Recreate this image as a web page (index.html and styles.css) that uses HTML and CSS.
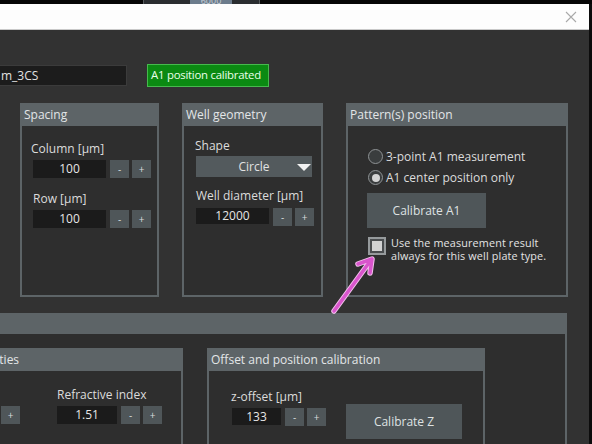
FILE: index.html
```html
<!DOCTYPE html>
<html>
<head>
<meta charset="utf-8">
<link rel="stylesheet" href="styles.css">
</head>
<body>
<div class="topstrip"><div class="tab"><div class="tabinner">6000</div></div></div>
<div class="window">
  <div class="titlebar">
    <svg class="close" width="12" height="12" viewBox="0 0 12 12"><path d="M1 1L11 11M11 1L1 11" stroke="#a9a9a9" stroke-width="1.1" fill="none"/></svg>
  </div>
  <div class="content">
    <div class="row1">
      <div class="namefield">m_3CS</div>
      <div class="badge">A1 position calibrated</div>
    </div>
    <div class="row2">
      <section class="group spacing">
        <div class="ghead">Spacing</div>
        <div class="gbody">
          <div class="field">
            <div class="label">Column [µm]</div>
            <div class="ctrl"><div class="num w73">100</div><div class="btn">-</div><div class="btn">+</div></div>
          </div>
          <div class="field">
            <div class="label">Row [µm]</div>
            <div class="ctrl"><div class="num w73">100</div><div class="btn">-</div><div class="btn">+</div></div>
          </div>
        </div>
      </section>
      <section class="group geometry">
        <div class="ghead">Well geometry</div>
        <div class="gbody">
          <div class="label">Shape</div>
          <div class="dropdown"><span>Circle</span><span class="tri"></span></div>
          <div class="label lbl2">Well diameter [µm]</div>
          <div class="ctrl"><div class="num w73 h16">12000</div><div class="btn">-</div><div class="btn">+</div></div>
        </div>
      </section>
      <section class="group pattern">
        <div class="ghead">Pattern(s) position</div>
        <div class="gbody">
          <div class="radio"><span class="rcircle"></span><span>3-point A1 measurement</span></div>
          <div class="radio"><span class="rcircle on"></span><span>A1 center position only</span></div>
          <div class="bigbtn calA1">Calibrate A1</div>
          <div class="check"><span class="cbox"><span class="cfill"></span></span><span class="ctext"><span class="cline">Use the measurement result</span><span class="cline">always for this well plate type.</span></span></div>
        </div>
      </section>
    </div>
    <section class="group big">
      <div class="ghead bighead"></div>
      <div class="gbody bigbody">
        <section class="group props">
          <div class="ghead">Properties</div>
          <div class="gbody propsbody">
            <div class="field first">
              <div class="label">&nbsp;</div>
              <div class="ctrl"><div class="num w60">1.0</div><div class="btn">-</div><div class="btn">+</div></div>
            </div>
            <div class="field">
              <div class="label">Refractive index</div>
              <div class="ctrl"><div class="num w60">1.51</div><div class="btn">-</div><div class="btn">+</div></div>
            </div>
          </div>
        </section>
        <section class="group offset">
          <div class="ghead">Offset and position calibration</div>
          <div class="gbody offsetbody">
            <div class="field">
              <div class="label">z-offset [µm]</div>
              <div class="ctrl"><div class="num w49">133</div><div class="btn">-</div><div class="btn">+</div></div>
            </div>
            <div class="bigbtn calZ">Calibrate Z</div>
          </div>
        </section>
      </div>
    </section>
  </div>
</div>
<svg class="arrow" width="592" height="444" viewBox="0 0 592 444">
  <g fill="none" stroke-linecap="round" stroke-linejoin="round">
    <path d="M334 311L371 260M358 264L372 259L370 273" stroke="#f2c2ec" stroke-width="5.5"/>
    <path d="M334 311L371 260M358 264L372 259L370 273" stroke="#d955cc" stroke-width="3.5"/>
  </g>
</svg>
</body>
</html>
```
FILE: styles.css
```css
* { box-sizing: border-box; }
html, body { margin: 0; padding: 0; }
body {
  width: 592px;
  height: 444px;
  overflow: hidden;
  background: #0c0c0c;
  font-family: "Open Sans", "Noto Sans", sans-serif;
  font-size: 12px;
  color: #dedede;
  position: relative;
}
.topstrip {
  height: 4px;
  background: #050505;
  position: relative;
}
.tab {
  position: absolute;
  left: 143px;
  top: 0;
  width: 117px;
  height: 4px;
  background: #2a2d30;
  border-left: 1px solid #55595c;
  border-right: 1px solid #55595c;
}
.tabinner {
  margin-left: 46px;
  width: 42px;
  height: 4px;
  background: #6c7c8c;
  color: #c8d0d8;
  font-size: 9px;
  line-height: 2px;
  overflow: hidden;
  text-align: center;
}
.window {
  width: 589px;
  height: 440px;
  background: #323232;
  overflow: hidden;
}
.titlebar {
  height: 26px;
  background: #fdfdfd;
  border-bottom: 1px solid #c9c9c9;
  display: flex;
  justify-content: flex-end;
  align-items: center;
  padding-right: 12px;
}
.close { display: block; }
.content {
  padding-top: 34px;
}
.row1 {
  display: flex;
  align-items: center;
  gap: 20px;
  height: 23px;
}
.namefield {
  width: 127px;
  height: 21px;
  background: #1c1c1c;
  border: 1px solid #3b3b3b;
  border-left: none;
  color: #e2e2e2;
  font-size: 12px;
  line-height: 19px;
  padding-left: 1px;
}
.badge {
  width: 122px;
  height: 23px;
  background: #0b8a12;
  border: 1px solid #47b84e;
  color: #eaffea;
  font-size: 11.4px;
  letter-spacing: -0.25px;
  white-space: nowrap;
  line-height: 20px;
  padding-left: 3px;
}
.row2 {
  display: flex;
  gap: 23px;
  margin-top: 16px;
  padding-left: 20px;
  height: 194px;
}
.group {
  border: 2px solid #5d6467;
  background: #2e2e2e;
  display: flex;
  flex-direction: column;
}
.ghead {
  height: 21px;
  background: #5d6467;
  color: #e3e6e7;
  font-size: 12px;
  line-height: 19px;
  padding-left: 2px;
  flex: none;
  white-space: nowrap;
}
.gbody { flex: 1; }
.spacing { width: 139px; }
.geometry { width: 141px; }
.pattern { width: 222px; }
.label {
  height: 16px;
  line-height: 16px;
  font-size: 12px;
  color: #dcdcdc;
  white-space: nowrap;
}
.ctrl {
  display: flex;
  align-items: flex-start;
  margin-top: 3px;
}
.num {
  height: 18px;
  background: #1b1b1b;
  color: #e6e6e6;
  font-size: 12px;
  line-height: 18px;
  text-align: center;
  margin-right: 4px;
}
.w73 { width: 73px; }
.w60 { width: 60px; }
.w49 { width: 49px; }
.h16 { height: 16px; line-height: 16px; }
.btn {
  width: 19px;
  height: 18px;
  background: #4f5659;
  color: #d8dcdd;
  font-size: 10px;
  line-height: 18px;
  text-align: center;
  margin-right: 3px;
}
.spacing .gbody { padding: 15px 0 0 9px; }
.spacing .ctrl { margin-left: 2px; }
.spacing .field + .field { margin-top: 13px; }
.spacing .field + .field .label { padding-left: 2px; }

.geometry .gbody { padding: 12px 0 0 12px; }
.geometry .label:first-child { margin-left: -1px; }
.dropdown {
  margin-top: 2px;
  width: 116px;
  height: 21px;
  background: #535a5d;
  display: flex;
  align-items: center;
  justify-content: center;
  position: relative;
  font-size: 12px;
  color: #e2e2e2;
}
.dropdown .tri {
  position: absolute;
  right: 1px;
  top: 8px;
  width: 0;
  height: 0;
  border-left: 7px solid transparent;
  border-right: 7px solid transparent;
  border-top: 7px solid #f2f2f2;
}
.lbl2 { margin-top: 11px; }
.geometry .ctrl { margin-top: 4px; }

.pattern .gbody { padding: 20px 0 0 18px; }
.radio {
  height: 21px;
  display: flex;
  align-items: center;
  gap: 3px;
  font-size: 12px;
  color: #dcdcdc;
  margin-left: 2px;
}
.rcircle {
  width: 15px;
  height: 15px;
  border-radius: 50%;
  border: 1.5px solid #8e9294;
  background: #3a3d3e;
  display: flex;
  align-items: center;
  justify-content: center;
  flex: none;
}
.rcircle.on::after {
  content: "";
  width: 8px;
  height: 8px;
  border-radius: 50%;
  background: #d4d4d4;
}
.bigbtn {
  background: #4f5659;
  color: #dfe2e3;
  font-size: 12px;
  display: flex;
  align-items: center;
  justify-content: center;
}
.calA1 {
  width: 119px;
  height: 35px;
  margin-top: 5px;
  margin-left: 1px;
}
.check {
  display: flex;
  gap: 5px;
  margin-top: 9px;
  margin-left: 2px;
}
.cbox {
  width: 18px;
  height: 18px;
  border: 2px solid #969a9c;
  background: #4a4d4f;
  padding: 2px;
  flex: none;
  display: block;
}
.cfill {
  display: block;
  width: 10px;
  height: 10px;
  background: #d2d2d2;
}
.ctext {
  display: flex;
  flex-direction: column;
  margin-top: -1px;
}
.cline {
  display: block;
  height: 13px;
  font-size: 10.8px;
  line-height: 13px;
  letter-spacing: 0.15px;
  color: #e4e4e4;
  white-space: nowrap;
}

.big {
  margin-top: 16px;
  margin-left: -10px;
  width: 577px;
  height: 160px;
}
.bighead { height: 19px; }
.bigbody {
  display: flex;
  gap: 24px;
  padding-top: 14px;
}
.props {
  width: 193px;
  margin-left: -2px;
  height: 120px;
}
.props .ghead { text-indent: -33px; overflow: hidden; }
.propsbody {
  display: flex;
  gap: 34px;
  padding-top: 16px;
}
.props .field.first { margin-left: -77px; }
.offset {
  width: 278px;
  height: 120px;
}
.offsetbody {
  display: flex;
  align-items: flex-start;
  gap: 17px;
  padding: 18px 0 0 22px;
}
.offset .ctrl { margin-left: 1px; }
.offset .num { height: 17px; line-height: 17px; }
.calZ {
  width: 116px;
  height: 35px;
  margin-top: 15px;
}
.arrow {
  position: absolute;
  left: 0;
  top: 0;
  pointer-events: none;
}
```
